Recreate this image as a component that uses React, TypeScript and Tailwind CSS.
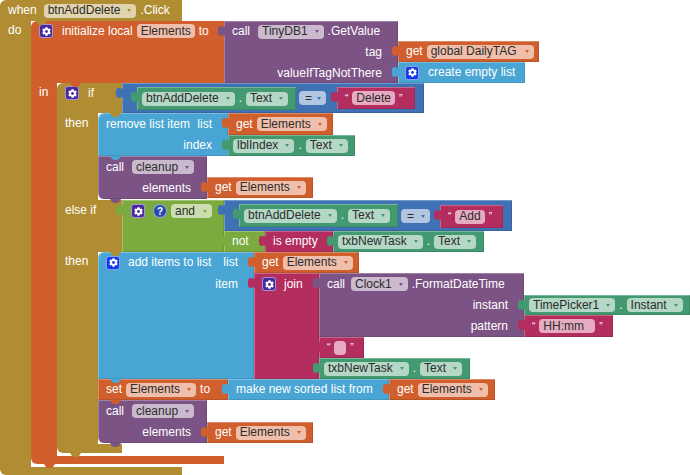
import type { ReactNode } from "react";
import { FaCog } from "react-icons/fa";

type Tone = "gold" | "orange" | "purple" | "blue" | "green" | "lime" | "eq" | "pink";

const blockBg: Record<Tone, string> = {
  gold: "bg-[#B08D33]",
  orange: "bg-[#D05F2D]",
  purple: "bg-[#7C5385]",
  blue: "bg-[#49A6D4]",
  green: "bg-[#439A70]",
  lime: "bg-[#7BAA3F]",
  eq: "bg-[#3F71B5]",
  pink: "bg-[#B32D5E]",
};

const tabFill: Record<Tone, string> = {
  gold: "fill-[#B08D33]",
  orange: "fill-[#D05F2D]",
  purple: "fill-[#7C5385]",
  blue: "fill-[#49A6D4]",
  green: "fill-[#439A70]",
  lime: "fill-[#7BAA3F]",
  eq: "fill-[#3F71B5]",
  pink: "fill-[#B32D5E]",
};

const pillBg: Record<Tone, string> = {
  gold: "bg-[#E0D3AD]",
  orange: "bg-[#F0BFAB]",
  purple: "bg-[#CBBACE]",
  blue: "bg-[#B6DBEE]",
  green: "bg-[#B4D7C6]",
  lime: "bg-[#CBDDB1]",
  eq: "bg-[#B2C6E1]",
  pink: "bg-[#E7ABC1]",
};

const arrowColor: Record<Tone, string> = {
  gold: "border-t-[#B08D33]",
  orange: "border-t-[#D05F2D]",
  purple: "border-t-[#7C5385]",
  blue: "border-t-[#49A6D4]",
  green: "border-t-[#439A70]",
  lime: "border-t-[#7BAA3F]",
  eq: "border-t-[#3F71B5]",
  pink: "border-t-[#B32D5E]",
};

// puzzle tab sticking out on the left of a value block
const Tab = ({ tone }: { tone: Tone }) => (
  <svg className="absolute left-[-6px] top-[4px] h-[12px] w-[7px] overflow-visible" viewBox="0 0 7 12">
    <path
      className={tabFill[tone]}
      d="M7 0 V1 C5 3 3 0 1 1.5 C-0.5 3 -0.5 9 1 10.5 C3 12 5 9 7 11 V12 Z"
    />
  </svg>
);

// little bump under a statement block
const Bump = ({ tone, className }: { tone: Tone; className: string }) => (
  <svg className={`absolute z-10 h-[4px] w-[11px] ${className}`} viewBox="0 0 11 4">
    <path className={tabFill[tone]} d="M0 0 L2 3 Q3 4 5.5 4 Q8 4 9 3 L11 0 Z" />
  </svg>
);

const Block = ({
  tone,
  className,
  tab,
  inFlow,
  children,
}: {
  tone: Tone;
  className: string;
  tab?: boolean;
  inFlow?: boolean;
  children?: ReactNode;
}) => (
  <div
    className={`flex shadow-[inset_1px_1px_0_rgba(255,255,255,0.28),inset_-1px_-1px_0_rgba(0,0,0,0.1)] ${inFlow ? "relative" : "absolute"} ${blockBg[tone]} ${className}`}
  >
    {tab && <Tab tone={tone} />}
    {children}
  </div>
);

const Field = ({
  label,
  tone,
  arrow = true,
  className = "",
}: {
  label: string;
  tone: Tone;
  arrow?: boolean;
  className?: string;
}) => (
  <span
    className={`inline-flex h-[14px] shrink-0 items-center justify-between rounded-[4px] pl-[4px] text-[#2c2c2c] ${arrow ? "pr-[5px]" : "pr-[4px]"} ${pillBg[tone]} ${className}`}
  >
    {label}
    {arrow && (
      <i className={`ml-[7px] h-0 w-0 border-x-[2.5px] border-t-[3px] border-x-transparent ${arrowColor[tone]}`} />
    )}
  </span>
);

const Mutator = ({ bright, className = "" }: { bright?: boolean; className?: string }) => (
  <span
    className={`flex h-[14px] w-[14px] shrink-0 items-center justify-center rounded-[3px] border border-white/50 text-[9px] text-white ${bright ? "bg-[#1238E8]" : "bg-[#46289F]"} ${className}`}
  >
    <FaCog />
  </span>
);

const GetElements = ({ className }: { className: string }) => (
  <Block tone="orange" tab className={`items-center gap-[4px] pl-[8px] text-white ${className}`}>
    get
    <Field label="Elements" tone="orange" />
  </Block>
);

const Quote = ({
  label,
  className,
  pill = "",
  inFlow,
}: {
  label: string;
  className: string;
  pill?: string;
  inFlow?: boolean;
}) => (
  <Block tone="pink" tab inFlow={inFlow} className={`items-center gap-[4px] pl-[8px] text-[10px] text-white ${className}`}>
    “
    <Field label={label} tone="pink" arrow={false} className={`text-[12px] ${pill}`} />
    ”
  </Block>
);

const Property = ({
  name,
  prop,
  className,
  inFlow,
}: {
  name: string;
  prop: string;
  className: string;
  inFlow?: boolean;
}) => (
  <Block tone="green" tab inFlow={inFlow} className={`items-center gap-[4px] pl-[5px] text-white ${className}`}>
    <Field label={name} tone="green" />
    .
    <Field label={prop} tone="green" />
  </Block>
);

const CallCleanup = ({ className }: { className: string }) => (
  <Block tone="purple" className={`flex-col rounded-bl-md text-white ${className}`}>
    <div className="flex h-[22px] items-center gap-[8px] pl-[8px]">
      call
      <Field label="cleanup" tone="purple" />
    </div>
    <div className="flex h-[21px] items-center justify-end pr-[16px]">elements</div>
  </Block>
);

const EqPill = ({ className }: { className: string }) => (
  <span
    className={`flex h-[14px] shrink-0 items-center justify-between rounded-[4px] bg-[#B2C6E1] pl-[6px] pr-[5px] text-[#2c2c2c] ${className}`}
  >
    =
    <i className="h-0 w-0 border-x-[2.5px] border-t-[3px] border-x-transparent border-t-[#3F71B5]" />
  </span>
);

export default function App() {
  return (
    <div className="relative h-[475px] w-[690px] overflow-hidden bg-white font-['Liberation_Sans',Arial,sans-serif] text-[12px] leading-[15px] whitespace-nowrap">
      {/* when btnAddDelete.Click: header, left arm, foot */}
      <div className="absolute left-0 top-0 flex h-[475px] w-[182px] flex-col text-white">
        <div className="flex h-[21px] items-center rounded-tl-md bg-[#B08D33] pl-[8px]">
          when
          <Field label="btnAddDelete" tone="gold" className="ml-[7px] mr-[4px]" />
          .Click
        </div>
        <div className="w-[31px] flex-1 bg-[#B08D33] pl-[8px] pt-[2px]">do</div>
        <div className="h-[8px] rounded-bl-md bg-[#B08D33]" />
      </div>
      <Bump tone="gold" className="left-[36px] top-[21px]" />

      {/* initialize local */}
      <div className="absolute left-[31px] top-[21px] flex h-[443px] w-[193px] flex-col text-white">
        <div className="flex h-[62px] items-start rounded-tl-md bg-[#D05F2D] pl-[8px] pt-[3px]">
          <Mutator />
          <span className="ml-[9px]">initialize local</span>
          <Field label="Elements" tone="orange" arrow={false} className="ml-[4px]" />
          <span className="ml-[4px]">to</span>
        </div>
        <div className="w-[26px] flex-1 bg-[#D05F2D] pl-[8px] pt-[2px]">in</div>
        <div className="h-[8px] rounded-bl-md bg-[#D05F2D]" />
      </div>
      <Bump tone="orange" className="left-[44px] top-[464px]" />

      {/* TinyDB1.GetValue */}
      <Block tone="purple" tab className="left-[224px] top-[21px] h-[62px] w-[174px] flex-col text-white">
        <div className="flex h-[21px] items-center pl-[8px]">
          call
          <Field label="TinyDB1" tone="purple" className="ml-[8px] mr-[4px]" />
          .GetValue
        </div>
        <div className="flex h-[21px] items-center justify-end pr-[16px]">tag</div>
        <div className="flex h-[20px] items-center justify-end pr-[16px]">valueIfTagNotThere</div>
      </Block>
      <Block tone="orange" tab className="left-[398px] top-[41px] h-[21px] w-[141px] items-center gap-[4px] pl-[8px] text-white">
        get
        <Field label="global DailyTAG" tone="orange" className="w-[107px]" />
      </Block>
      <Block tone="blue" tab className="left-[398px] top-[62px] h-[21px] w-[127px] items-center gap-[9px] pl-[7px] text-white">
        <Mutator bright />
        create empty list
      </Block>

      {/* if / then / else if / then */}
      <div className="absolute left-[57px] top-[83px] flex h-[370px] w-[65px] flex-col text-white">
        <div className="flex h-[30px] items-start rounded-tl-md bg-[#B08D33] pl-[8px] pt-[3px]">
          <Mutator />
          <span className="ml-[9px]">if</span>
        </div>
        <div className="h-[87px] w-[41px] bg-[#B08D33] pl-[8px] pt-[3px]">then</div>
        <div className="h-[52px] bg-[#B08D33] pl-[8px] pt-[3px]">else if</div>
        <div className="w-[41px] flex-1 bg-[#B08D33] pl-[8px] pt-[2px]">then</div>
        <div className="h-[9px] rounded-bl-md bg-[#B08D33]" />
      </div>
      <Bump tone="orange" className="left-[70px] top-[83px]" />
      <Bump tone="gold" className="left-[70px] top-[453px]" />

      {/* btnAddDelete.Text = "Delete" */}
      <Block tone="eq" tab className="left-[122px] top-[83px] h-[30px] w-[302px] items-start pl-[15px] pt-[4px]">
        <Property inFlow name="btnAddDelete" prop="Text" className="h-[23px] w-[159px]" />
        <EqPill className="ml-[3px] mt-[4px] w-[27px]" />
        <Quote inFlow label="Delete" className="ml-[11px] h-[22px] w-[78px]" />
      </Block>

      {/* remove list item */}
      <Block tone="blue" className="left-[98px] top-[113px] h-[43px] w-[130px] flex-col rounded-tl-md text-white">
        <div className="flex h-[22px] items-center justify-between pl-[8px] pr-[16px]">
          <span>remove list item</span>
          <span>list</span>
        </div>
        <div className="flex h-[21px] items-center justify-end pr-[16px]">index</div>
      </Block>
      <Bump tone="gold" className="left-[110px] top-[113px]" />
      <Bump tone="blue" className="left-[110px] top-[156px]" />
      <GetElements className="left-[228px] top-[113px] h-[22px] w-[105px]" />
      <Property name="lblIndex" prop="Text" className="left-[228px] top-[135px] h-[21px] w-[127px]" />

      <CallCleanup className="left-[98px] top-[156px] h-[43px] w-[109px]" />
      <Bump tone="purple" className="left-[110px] top-[199px]" />
      <GetElements className="left-[207px] top-[177px] h-[21px] w-[106px]" />

      {/* and */}
      <Block tone="lime" tab className="left-[122px] top-[200px] h-[52px] w-[102px] items-start pl-[9px] pt-[4px] text-[#2c2c2c]">
        <Mutator />
        <span className="ml-[8px] flex h-[14px] w-[14px] items-center justify-center rounded-full border border-white/50 bg-[#2447B0] text-[10px] font-bold text-white">
          ?
        </span>
        <Field label="and" tone="lime" className="ml-[4px] w-[41px]" />
      </Block>
      <Block tone="eq" tab className="left-[224px] top-[200px] h-[31px] w-[288px] items-start pl-[15px] pt-[4px]">
        <Property inFlow name="btnAddDelete" prop="Text" className="h-[23px] w-[159px]" />
        <EqPill className="ml-[3px] mt-[5px] w-[29px]" />
        <Quote inFlow label="Add" className="ml-[10px] mt-[1px] h-[23px] w-[63px]" />
      </Block>
      <Block tone="lime" tab className="left-[224px] top-[231px] h-[21px] w-[41px] items-center pl-[8px] text-white">
        not
      </Block>
      <Block tone="pink" tab className="left-[265px] top-[231px] h-[21px] w-[68px] items-center pl-[8px] text-white">
        is empty
      </Block>
      <Property name="txbNewTask" prop="Text" className="left-[333px] top-[231px] h-[21px] w-[151px]" />

      {/* add items to list */}
      <Block tone="blue" className="left-[98px] top-[252px] h-[127px] w-[156px] flex-col rounded-tl-md text-white">
        <div className="flex h-[21px] items-center pl-[8px] pr-[16px]">
          <Mutator bright />
          <span className="ml-[8px]">add items to list</span>
          <span className="ml-auto">list</span>
        </div>
        <div className="flex h-[22px] items-center justify-end pr-[16px]">item</div>
      </Block>
      <Bump tone="gold" className="left-[110px] top-[252px]" />
      <Bump tone="blue" className="left-[110px] top-[379px]" />
      <GetElements className="left-[254px] top-[252px] h-[21px] w-[105px]" />

      {/* join */}
      <Block tone="pink" tab className="left-[254px] top-[273px] h-[106px] w-[65px] items-start gap-[8px] pl-[8px] pt-[4px] text-white">
        <Mutator />
        join
      </Block>
      <Block tone="purple" tab className="left-[319px] top-[273px] h-[64px] w-[205px] flex-col text-white">
        <div className="flex h-[22px] items-center pl-[8px]">
          call
          <Field label="Clock1" tone="purple" className="ml-[6px] mr-[4px]" />
          .FormatDateTime
        </div>
        <div className="flex h-[21px] items-center justify-end pr-[16px]">instant</div>
        <div className="flex h-[21px] items-center justify-end pr-[16px]">pattern</div>
      </Block>
      <Property name="TimePicker1" prop="Instant" className="left-[524px] top-[295px] h-[20px] w-[166px]" />
      <Quote label="HH:mm" pill="w-[56px]" className="left-[524px] top-[315px] h-[22px] w-[89px]" />
      <Quote label="" pill="w-[12px]" className="left-[319px] top-[337px] h-[21px] w-[45px]" />
      <Property name="txbNewTask" prop="Text" className="left-[319px] top-[358px] h-[21px] w-[151px]" />

      {/* set Elements to */}
      <Block tone="orange" className="left-[98px] top-[379px] h-[21px] w-[130px] items-center pl-[8px] text-white">
        set
        <Field label="Elements" tone="orange" className="ml-[4px] mr-[4px]" />
        to
      </Block>
      <Bump tone="orange" className="left-[110px] top-[400px]" />
      <Block tone="blue" tab className="left-[228px] top-[379px] h-[21px] w-[161px] items-center pl-[8px] text-white">
        make new sorted list from
      </Block>
      <GetElements className="left-[389px] top-[379px] h-[21px] w-[106px]" />

      <CallCleanup className="left-[98px] top-[400px] h-[43px] w-[109px]" />
      <Bump tone="purple" className="left-[110px] top-[443px]" />
      <GetElements className="left-[207px] top-[422px] h-[21px] w-[106px]" />
    </div>
  );
}
